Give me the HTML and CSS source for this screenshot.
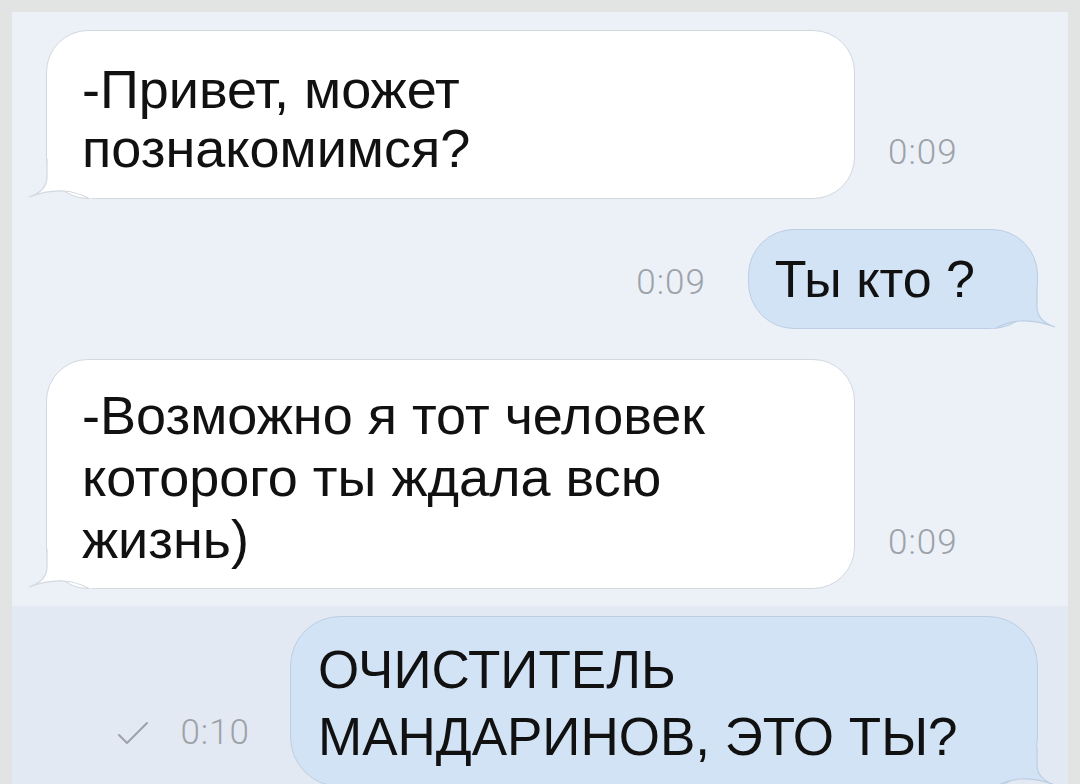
FILE: index.html
```html
<!DOCTYPE html>
<html lang="ru">

<head>
    <meta charset="UTF-8">
    <meta name="viewport" content="width=device-width, initial-scale=1.0">
    <title>Чат</title>
    <link rel="stylesheet" href="styles.css">
</head>

<body>
    <div class="frame">
        <div class="chat">
            <div class="history">
                <div class="row in">
                    <div class="bubble">
                        <svg class="tail" width="70" height="40" viewBox="0 0 70 40">
                            <path class="tail-fill" d="M20 0 L20 18 Q20 32 2 38 Q20 31 37 32 Q50 33 62 39.5 L70 39 L70 0 Z" />
                            <path class="tail-line" d="M20 0 L20 18 Q20 32 2 38 Q20 31 37 32 Q50 33 62 39.5" />
                        </svg>
                        <span class="text">-Привет, может<br>познакомимся?</span>
                    </div>
                    <span class="time">0:09</span>
                </div>

                <div class="row out">
                    <span class="time">0:09</span>
                    <div class="bubble short">
                        <svg class="tail" width="70" height="40" viewBox="0 0 70 40">
                            <path class="tail-fill" d="M20 0 L20 18 Q20 32 2 38 Q20 31 37 32 Q50 33 62 39.5 L70 39 L70 0 Z" />
                            <path class="tail-line" d="M20 0 L20 18 Q20 32 2 38 Q20 31 37 32 Q50 33 62 39.5" />
                        </svg>
                        <span class="text">Ты кто ?</span>
                    </div>
                </div>

                <div class="row in">
                    <div class="bubble tall">
                        <svg class="tail" width="70" height="40" viewBox="0 0 70 40">
                            <path class="tail-fill" d="M20 0 L20 18 Q20 32 2 38 Q20 31 37 32 Q50 33 62 39.5 L70 39 L70 0 Z" />
                            <path class="tail-line" d="M20 0 L20 18 Q20 32 2 38 Q20 31 37 32 Q50 33 62 39.5" />
                        </svg>
                        <span class="text">-Возможно я тот человек<br>которого ты ждала всю<br>жизнь)</span>
                    </div>
                    <span class="time">0:09</span>
                </div>
            </div>

            <div class="unread">
                <div class="row out">
                    <span class="status">
                        <svg class="check" width="34" height="26" viewBox="0 0 34 26">
                            <path d="M3 15 L11 23 L31 3" />
                        </svg>
                        <span class="time">0:10</span>
                    </span>
                    <div class="bubble caps">
                        <svg class="tail" width="70" height="40" viewBox="0 0 70 40">
                            <path class="tail-fill" d="M20 0 L20 18 Q20 32 2 38 Q20 31 37 32 Q50 33 62 39.5 L70 39 L70 0 Z" />
                            <path class="tail-line" d="M20 0 L20 18 Q20 32 2 38 Q20 31 37 32 Q50 33 62 39.5" />
                        </svg>
                        <span class="text">ОЧИСТИТЕЛЬ<br>МАНДАРИНОВ, ЭТО ТЫ?</span>
                    </div>
                </div>
            </div>
        </div>
    </div>
</body>

</html>
```

FILE: styles.css
```css
* {
    margin: 0;
    padding: 0;
    box-sizing: border-box;
}

html,
body {
    height: 784px;
    overflow: hidden;
}

body {
    background: #e2e4e3;
    font-family: "Liberation Sans", Arial, sans-serif;
    color: #111;
}

.frame {
    padding: 12px 12px 0 12px;
    height: 100%;
}

.chat {
    height: 100%;
    display: flex;
    flex-direction: column;
}

.history {
    background: #ecf1f8;
    padding: 18px 30px 17px 34px;
    display: flex;
    flex-direction: column;
    gap: 30px;
}

.unread {
    flex: 1;
    background: #e3e9f2;
    padding: 10px 30px 0 34px;
}

.row {
    display: flex;
    align-items: flex-end;
}

.row.out {
    justify-content: flex-end;
}

.bubble {
    position: relative;
    flex-shrink: 0;
    font-size: 54px;
    line-height: 59px;
    border-radius: 42px;
}

.bubble .text {
    position: relative;
}

.in .bubble {
    width: 809px;
    background: #fff;
    border: 1px solid #d2d8e0;
    padding: 29px 30px 20px 35px;
}

.out .bubble {
    background: #d3e3f6;
    border: 1px solid #bccee3;
}

.bubble.short {
    font-size: 52px;
    line-height: 60px;
    padding: 19px 62px 19px 26px;
    border-radius: 46px;
}

.in .bubble.tall {
    line-height: 62px;
    padding-top: 24px;
    padding-bottom: 18px;
}

.bubble.caps {
    width: 748px;
    font-size: 53px;
    line-height: 67px;
    padding: 19px 30px 16px 27px;
    border-radius: 50px;
}

.tail {
    position: absolute;
    left: -20px;
    bottom: -1px;
    overflow: visible;
}

.out .tail {
    left: auto;
    right: -20px;
    transform: scaleX(-1);
}

.tail-fill {
    fill: #fff;
}

.tail-line {
    fill: none;
    stroke: #d2d8e0;
    stroke-width: 1.2;
}

.out .tail-fill {
    fill: #d3e3f6;
}

.out .tail-line {
    stroke: #bccee3;
}

.time {
    font-family: Roboto, "Liberation Sans", sans-serif;
    font-weight: 300;
    font-size: 35px;
    line-height: 1;
    color: #9da2a9;
    letter-spacing: 1px;
}

.in .time {
    margin-left: 33px;
    margin-bottom: 29px;
}

.out .time {
    margin-right: 42px;
    margin-bottom: 29px;
}

.status {
    display: flex;
    align-items: center;
    gap: 30px;
    align-self: flex-start;
    margin-top: 99px;
}

.status .time {
    margin: 0 40px 0 0;
}

.check {
    fill: none;
    stroke: #9da2a9;
    stroke-width: 2;
    stroke-linecap: round;
    stroke-linejoin: round;
}
```
